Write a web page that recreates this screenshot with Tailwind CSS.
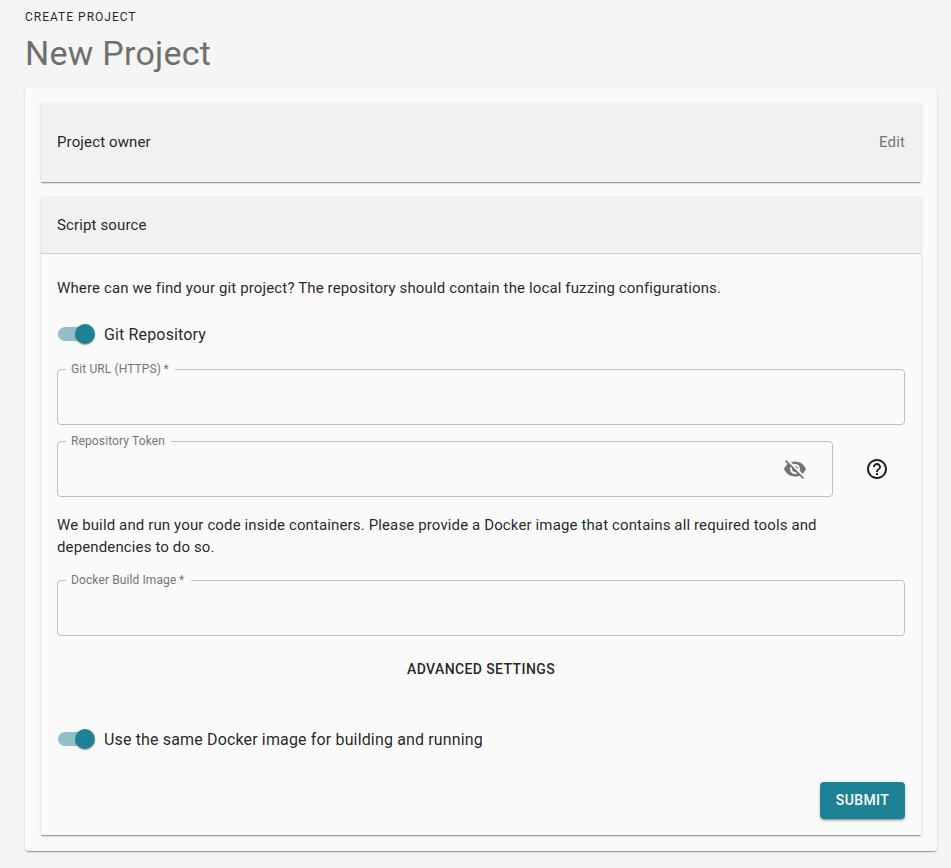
<!DOCTYPE html>
<html lang="en">
<head>
<meta charset="utf-8">
<title>New Project</title>
<script src="https://cdn.jsdelivr.net/npm/@tailwindcss/browser@4"></script>
</head>
<body class="bg-[#f5f5f5] h-[868px] overflow-hidden font-[Roboto,sans-serif] text-black/87">
<main class="flex flex-col pl-[25px] pr-[14px]">
  <div class="h-8 pt-px text-xs leading-8 tracking-[1px] uppercase">Create project</div>
  <h1 class="h-[42px] text-[34px] leading-[42px] tracking-[0.25px] text-[#6f6f6f]">New Project</h1>
  <section class="mt-[13px] flex h-[764px] flex-col gap-[15px] rounded bg-[#fafafa] p-4 shadow-[0_2px_1px_-1px_rgba(0,0,0,0.2),0_1px_1px_0_rgba(0,0,0,0.14),0_1px_3px_0_rgba(0,0,0,0.12)]">
    <div class="flex h-[79px] shrink-0 items-center justify-between bg-[#f1f1f1] px-4 text-[15px] tracking-[0.13px] shadow-[0_2px_1px_-1px_rgba(0,0,0,0.2),0_1px_1px_0_rgba(0,0,0,0.14),0_1px_3px_0_rgba(0,0,0,0.12)]">
      <span>Project owner</span><span class="text-[#757575]">Edit</span>
    </div>
    <div class="flex h-[638px] shrink-0 flex-col shadow-[0_2px_1px_-1px_rgba(0,0,0,0.2),0_1px_1px_0_rgba(0,0,0,0.14),0_1px_3px_0_rgba(0,0,0,0.12)]">
      <div class="flex h-[57px] shrink-0 items-center border-b border-[#d0d0d0] bg-[#f1f1f1] px-4 text-[15px] tracking-[0.13px]">Script source</div>
      <div class="flex flex-col px-4 pt-[23px]">
        <p class="text-[15px] leading-[22px] tracking-[0.13px]">Where can we find your git project? The repository should contain the local fuzzing configurations.</p>
        <label class="mt-[23px] flex h-6 items-center gap-[9px] pl-px text-base tracking-[0.15px]">
          <span class="relative h-[14px] w-[37px]"><span class="block h-[14px] w-[34px] rounded-full bg-[#8fc0ca]"></span><span class="absolute right-0 -top-[3px] size-5 rounded-full bg-[#1e8296] shadow-[0_2px_1px_-1px_rgba(0,0,0,0.2),0_1px_1px_0_rgba(0,0,0,0.14),0_1px_3px_0_rgba(0,0,0,0.12)]"></span></span>
          <span class="pt-0.5">Git Repository</span>
        </label>
        <div class="relative mt-[23px] h-14 rounded border border-[#bfbfbf]">
          <span class="absolute left-2 -top-[10px] bg-[#fafafa] pl-[5px] pr-[6px] text-xs leading-[18px] tracking-[0.11px] text-[#757575]">Git URL (HTTPS)&#8201;*</span>
        </div>
        <div class="mt-4 flex items-center">
          <div class="relative flex h-14 w-[776px] items-center justify-end rounded border border-[#bfbfbf] pr-[25px]">
            <span class="absolute left-2 -top-[10px] bg-[#fafafa] pl-[5px] pr-[6px] text-xs leading-[18px] tracking-[0.12px] text-[#757575]">Repository Token</span>
            <svg class="size-6" viewBox="0 0 24 24" fill="#757575"><path d="M12 7c2.76 0 5 2.24 5 5 0 .65-.13 1.26-.36 1.83l2.92 2.92c1.51-1.26 2.7-2.89 3.43-4.75-1.73-4.39-6-7.5-11-7.5-1.4 0-2.74.25-3.98.7l2.16 2.16C10.74 7.13 11.35 7 12 7zM2 4.27l2.28 2.28.46.46C3.08 8.3 1.78 10.02 1 12c1.73 4.39 6 7.5 11 7.5 1.55 0 3.03-.3 4.38-.84l.42.42L19.73 22 21 20.73 3.27 3 2 4.27zM7.53 9.8l1.55 1.55c-.05.21-.08.43-.08.65 0 1.66 1.34 3 3 3 .22 0 .44-.03.65-.08l1.55 1.55c-.67.33-1.41.53-2.2.53-2.76 0-5-2.24-5-5 0-.79.2-1.53.53-2.2zm4.31-.78l3.15 3.15.02-.16c0-1.66-1.34-3-3-3l-.17.01z"/></svg>
          </div>
          <svg class="ml-8 size-6" viewBox="0 0 24 24" fill="#212121"><path d="M11 18h2v-2h-2v2zm1-16C6.48 2 2 6.48 2 12s4.48 10 10 10 10-4.48 10-10S17.52 2 12 2zm0 18c-4.41 0-8-3.59-8-8s3.59-8 8-8 8 3.59 8 8-3.59 8-8 8zm0-14c-2.21 0-4 1.79-4 4h2c0-1.1.9-2 2-2s2 .9 2 2c0 2-3 1.75-3 5h2c0-2.25 3-2.5 3-5 0-2.21-1.79-4-4-4z"/></svg>
        </div>
        <p class="mt-[17px] text-[15px] leading-[22px] tracking-[0.13px]">We build and run your code inside containers. Please provide a Docker image that contains all required tools and dependencies to do so.</p>
        <div class="relative mt-[22px] h-14 rounded border border-[#bfbfbf]">
          <span class="absolute left-2 -top-[10px] bg-[#fafafa] pl-[5px] pr-[7px] text-xs leading-[18px] tracking-[0.11px] text-[#757575]">Docker Build Image&#8201;*</span>
        </div>
        <button class="mt-[15px] h-9 self-center text-sm font-medium tracking-[0.4px] uppercase">Advanced settings</button>
        <label class="mt-10 flex h-6 items-center gap-[9px] pl-px text-base tracking-[0.15px]">
          <span class="relative h-[14px] w-[37px]"><span class="block h-[14px] w-[34px] rounded-full bg-[#8fc0ca]"></span><span class="absolute right-0 -top-[3px] size-5 rounded-full bg-[#1e8296] shadow-[0_2px_1px_-1px_rgba(0,0,0,0.2),0_1px_1px_0_rgba(0,0,0,0.14),0_1px_3px_0_rgba(0,0,0,0.12)]"></span></span>
          <span class="pt-0.5">Use the same Docker image for building and running</span>
        </label>
        <button class="mt-[31px] h-[37px] w-[85px] self-end rounded bg-[#1e8296] pb-0.5 text-sm font-medium tracking-[0.4px] text-white uppercase shadow-[0_3px_1px_-2px_rgba(0,0,0,0.2),0_2px_2px_0_rgba(0,0,0,0.14),0_1px_5px_0_rgba(0,0,0,0.12)]">Submit</button>
      </div>
    </div>
  </section>
</main>
</body>
</html>
